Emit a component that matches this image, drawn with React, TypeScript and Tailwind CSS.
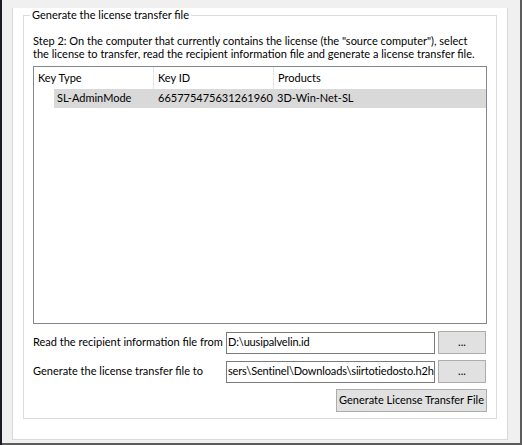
import React from "react";

const font = { fontFamily: 'Lato, "Noto Sans", sans-serif' };

const columns = [
  { title: "Key Type", width: "w-[120px]" },
  { title: "Key ID", width: "w-[120px]" },
  { title: "Products", width: "flex-1" },
];

const FileRow = ({ label, value }: { label: string; value: string }) => (
  <div className="flex items-center h-[23px]">
    <span className="w-[193px] whitespace-nowrap">{label}</span>
    <div className="w-[209px] h-[22px] border border-[#7a7a7a] bg-white flex items-center overflow-hidden whitespace-nowrap pl-[1px] tracking-[-0.15px]">
      {value}
    </div>
    <button className="ml-[3px] w-[48px] h-[23px] bg-[#e1e1e1] border border-[#adadad] leading-none pb-[2px]">
      ...
    </button>
  </div>
);

const App = () => {
  return (
    <div className="w-[522px] h-[445px] flex bg-[#f0f0f0] text-[11px] text-black" style={font}>
      <div className="w-[2px] h-full bg-[#1c1c27]" />
      <div className="flex-1 h-full border-r-2 border-b-2 border-[#5c5c5c] bg-[#f0f0f0]">
        {/* tab page */}
        <div className="ml-[10px] w-[496px] h-[432px] bg-white border-x border-b border-[#d9d9d9]">
          <fieldset className="ml-[10px] mt-[8px] w-[474px] h-[411px] border border-[#dcdcdc] px-[9px] pb-[6px] flex flex-col">
            <legend className="-ml-[3px] px-[2px] leading-[14px]">Generate the license transfer file</legend>
            <p className="mt-[12px] leading-[13px]">
              Step 2: On the computer that currently contains the license (the "source computer"), select
              <br />
              the license to transfer, read the recipient information file and generate a license transfer file.
            </p>

            {/* license list */}
            <div className="mt-[6px] w-[454px] h-[258px] border border-[#828790] bg-white">
              <div className="flex h-[22px]">
                {columns.map((c, i) => (
                  <div
                    key={c.title}
                    className={`${c.width} flex items-center pl-[4px] ${i < 2 ? "border-r border-[#e5e5e5]" : ""}`}
                  >
                    {c.title}
                  </div>
                ))}
              </div>
              <div className="flex h-[19px] items-center">
                <div className="w-[120px] h-full flex">
                  <div className="w-[20px]" />
                  <div className="flex-1 h-full bg-[#d9d9d9] flex items-center pl-[3px]">SL-AdminMode</div>
                </div>
                <div className="w-[120px] h-full bg-[#d9d9d9] flex items-center pl-[4px]">665775475631261960</div>
                <div className="flex-1 h-full bg-[#d9d9d9] flex items-center pl-[3px]">3D-Win-Net-SL</div>
              </div>
            </div>

            <div className="mt-[7px] flex flex-col gap-[6px]">
              <FileRow label="Read the recipient information file from" value="D:\uusipalvelin.id" />
              <FileRow
                label="Generate the license transfer file to"
                value="sers\Sentinel\Downloads\siirtotiedosto.h2h"
              />
            </div>

            <div className="mt-[6px] flex justify-end">
              <button className="w-[151px] h-[23px] bg-[#e1e1e1] border border-[#adadad] whitespace-nowrap">
                Generate License Transfer File
              </button>
            </div>
          </fieldset>
        </div>
      </div>
    </div>
  );
};

export default App;
